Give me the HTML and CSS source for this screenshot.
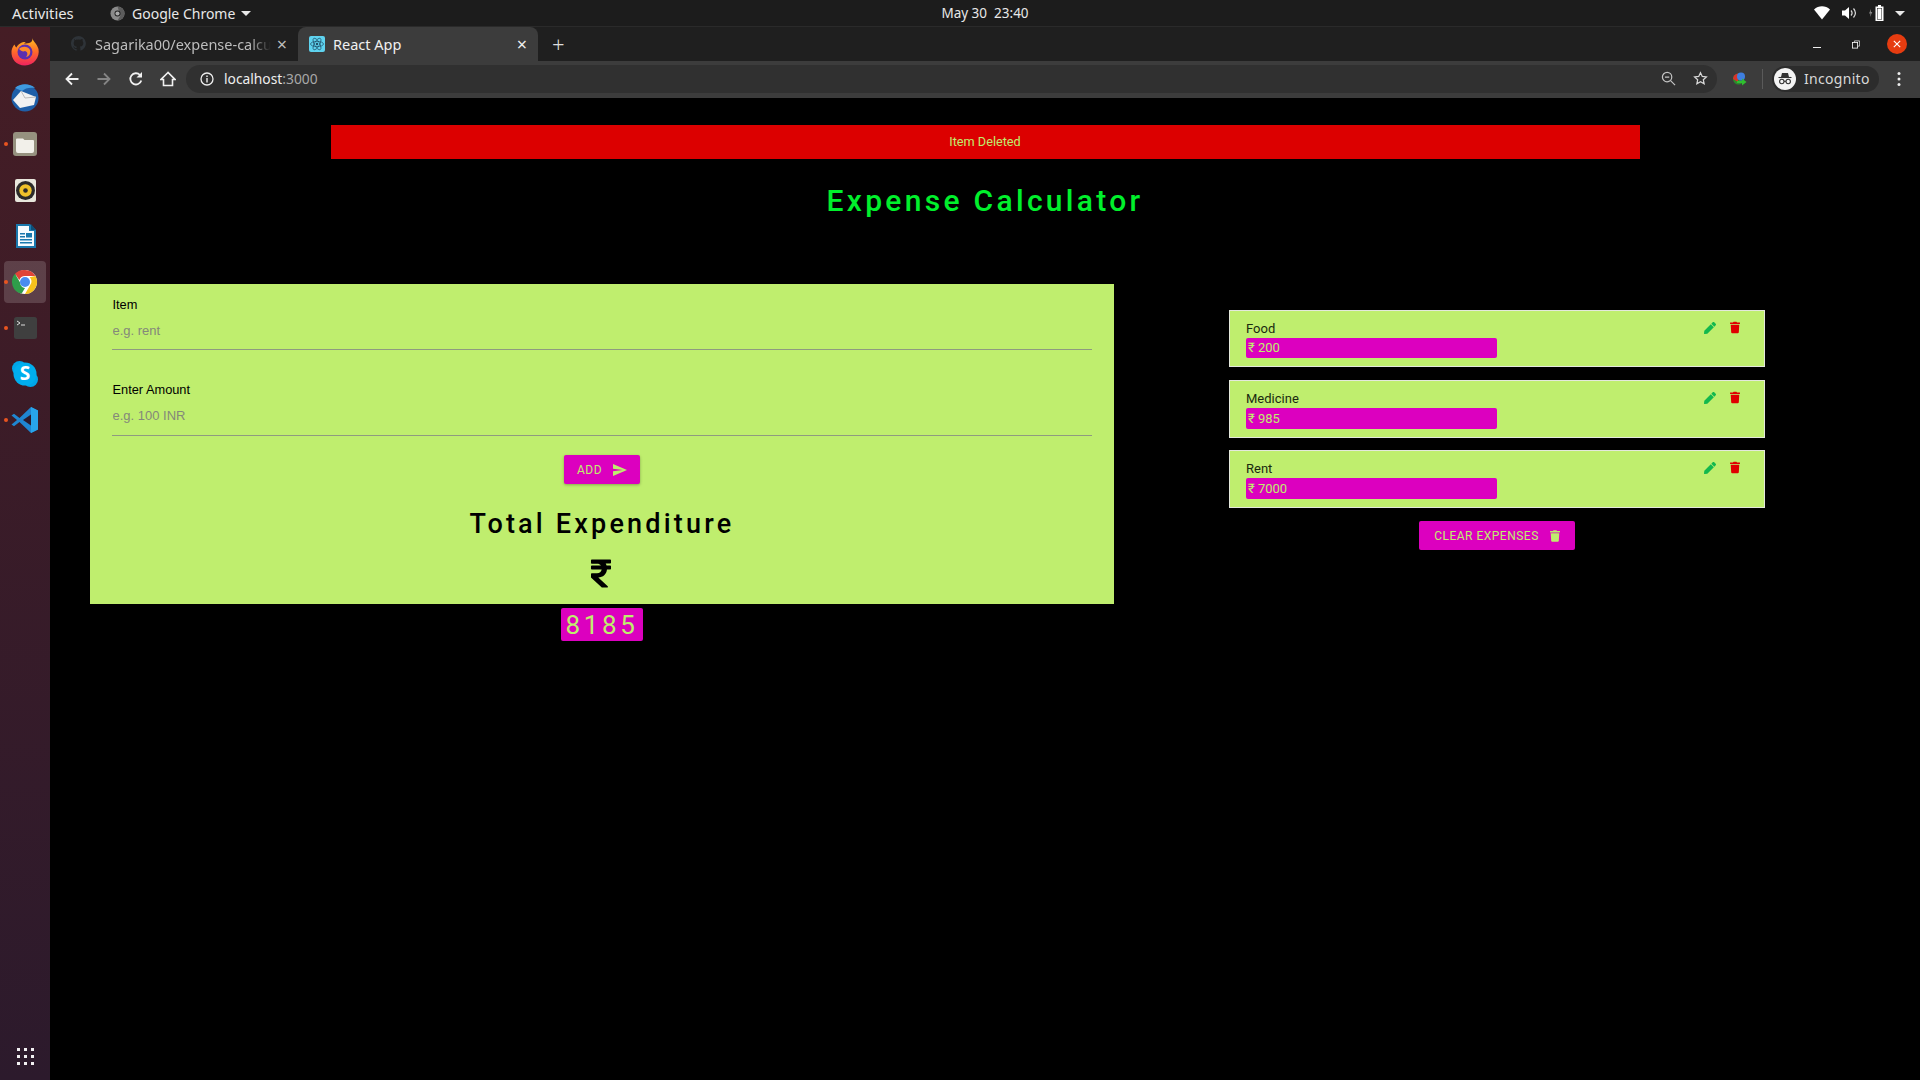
FILE: index.html
```html
<!DOCTYPE html>
<html lang="en">
<head>
<meta charset="utf-8">
<title>React App</title>
<link rel="stylesheet" href="styles.css">
</head>
<body>
<svg class="defs" width="0" height="0">
  <symbol id="trash" viewBox="0 0 448 512"><path d="M432 32H312l-9.4-18.7A24 24 0 0 0 281.1 0H166.8a23.72 23.72 0 0 0-21.4 13.3L136 32H16A16 16 0 0 0 0 48v32a16 16 0 0 0 16 16h416a16 16 0 0 0 16-16V48a16 16 0 0 0-16-16zM53.2 467a48 48 0 0 0 47.9 45h245.8a48 48 0 0 0 47.9-45L416 128H32z"/></symbol>
  <symbol id="pen" viewBox="0 0 512 512"><path d="M290.74 93.24l128.02 128.02-277.99 277.99-114.14 12.6C11.35 513.54-1.56 500.62.14 485.34l12.7-114.22 277.9-278.1zm207.2-19.06l-60.11-60.11c-18.75-18.75-49.16-18.75-67.91 0l-56.55 56.55 128.02 128.02 56.55-56.55c18.75-18.76 18.75-49.16 0-67.91z"/></symbol>
</svg>

<header class="topbar">
  <div class="top-left">
    <span class="activities">Activities</span>
    <span class="app-menu">
      <svg class="chrome-mono" viewBox="0 0 16 16"><circle cx="8" cy="8" r="7.5" fill="#8a8a8a"/><path d="M8 .5A7.500 7.500 0 0 1 15.500 8a7.500 7.500 0 0 1-7.500 7.500L11 10.500z" fill="#5c5c5c"/><circle cx="8" cy="8" r="3.200" fill="#222"/><circle cx="8" cy="8" r="2.200" fill="#aaa"/></svg>
      Google Chrome
      <i class="caret"></i>
    </span>
  </div>
  <div class="clock"><span>May 30</span><span>23:40</span></div>
  <div class="tray">
    <svg class="tray-wifi" viewBox="0 0 16 14"><path d="M0 3.5C4.5-.8 11.500-.8 16 3.500L8 13.500z" fill="#fff"/></svg>
    <svg class="tray-vol" viewBox="0 0 16 14"><path d="M1 4.500h3L8 1v12L4 9.500H1z" fill="#fff"/><path d="M10 4.500c1.300 1.500 1.300 3.500 0 5M12.500 2.500c2.300 2.700 2.300 6.300 0 9" fill="none" stroke="#ddd" stroke-width="1.200"/></svg>
    <svg class="tray-bat" viewBox="0 0 18 16"><path d="M3 4L1 8.500h1.500L2 12l2.300-5H2.800z" fill="#888"/><path d="M10 0h3v1.500h2.500V16h-8V1.500H10z" fill="#fff"/><rect x="9" y="3" width="5" height="11.500" fill="#1d1d1d"/><rect x="9.500" y="3.500" width="4" height="10.500" fill="#fff"/></svg>
    <i class="caret caret-tray"></i>
  </div>
</header>

<div class="desktop">
  <nav class="dock">
    <div class="dock-item">
      <svg viewBox="0 0 30 30"><defs><linearGradient id="fx" x1="0" y1="0" x2="0" y2="1"><stop offset="0" stop-color="#ffc01f"/><stop offset=".5" stop-color="#ff6a2a"/><stop offset="1" stop-color="#f0225f"/></linearGradient></defs><path d="M22 1c1 3 5 6 6.500 11 1.500 8-4.500 16.500-13.500 16.500S1 22 1.500 14C2 11 3.500 8.500 4.500 7.500 5 9 5.500 9.800 6.500 10.500 8 6.500 13 4.500 16 5c-1 .5-1.500 1-2 1.500 5 0 9.500-1 8-5.500z" fill="url(#fx)"/><circle cx="15" cy="15" r="7.500" fill="#5b2fb0"/><path d="M9 12c3-3 9-3 11 1 1 3-1 7-4 7 2-2 2-5-1-6-2 1-4 0-6-2z" fill="#ff8a2a"/></svg>
    </div>
    <div class="dock-item">
      <svg viewBox="0 0 30 30"><circle cx="15" cy="15" r="13.500" fill="#1f5fa8"/><path d="M5 5c5-5 15-5 20 0-5-1-10 0-13 3z" fill="#3f9ae0"/><path d="M3 17l8-9 15 6-2 8-14 3z" fill="#f2f2f2"/><path d="M11 8l4 7 11-1" fill="none" stroke="#bbb" stroke-width="1"/></svg>
    </div>
    <div class="dock-item has-dot">
      <svg viewBox="0 0 30 30"><rect x="3" y="3" width="24" height="24" rx="3" fill="#96917f"/><path d="M7 9.500h6l1.500 1.500H23a1 1 0 0 1 1 1v10a2 2 0 0 1-2 2H8a2 2 0 0 1-2-2V10.500a1 1 0 0 1 1-1z" fill="#f2f0ea"/></svg>
    </div>
    <div class="dock-item">
      <svg viewBox="0 0 30 30"><rect x="5" y="4" width="21" height="23" rx="2" fill="#e8e6dc"/><circle cx="15.500" cy="15.500" r="9.500" fill="#2b2b2b"/><circle cx="15.500" cy="15.500" r="6.200" fill="#efc22b"/><circle cx="15.500" cy="15.500" r="2.300" fill="#2b2b2b"/></svg>
    </div>
    <div class="dock-item">
      <svg viewBox="0 0 30 30"><path d="M6 3h14l6 6v18H6z" fill="#1a78ad"/><path d="M8 5h11v5h5v15H8z" fill="#f6fbfe"/><path d="M21 3l5 6h-5z" fill="#0d4f78"/><path d="M10 12h5v1.500h-5zM10 15h5v1.500h-5zM10 18h12v1.500H10zM10 21h12v1.500H10z" fill="#1a78ad"/><rect x="16" y="12" width="6" height="4.500" fill="#1a78ad"/></svg>
    </div>
    <div class="dock-item dock-active has-dot">
      <svg viewBox="0 0 30 30"><circle cx="15" cy="15" r="12" fill="#fff"/><path d="M15 3a12 12 0 0 1 10.400 6H15a6 6 0 0 0-5.700 4.100L5 6.800A12 12 0 0 1 15 3z" fill="#e04437"/><path d="M5 6.800l5.200 9A5.500 5.500 0 0 0 15 21l-3.300 5.600A12 12 0 0 1 5 6.800z" fill="#2f9d4a"/><path d="M25.400 9a12 12 0 0 1-10.400 18l5.200-9a6 6 0 0 0-.6-7.700z" fill="#f7c21c"/><circle cx="15" cy="15" r="5" fill="#4a8cf0"/></svg>
    </div>
    <div class="dock-item has-dot">
      <svg viewBox="0 0 30 30"><rect x="4" y="4" width="23" height="22" rx="2.500" fill="#3f3f3f"/><path d="M7 8l3 2-3 2" fill="none" stroke="#ddd" stroke-width="1"/><path d="M11 12h4" stroke="#ddd" stroke-width="1"/></svg>
    </div>
    <div class="dock-item">
      <svg viewBox="0 0 30 30"><circle cx="9.500" cy="9.500" r="7.500" fill="#00a6e8"/><circle cx="20.500" cy="20.500" r="7.500" fill="#00a6e8"/><circle cx="15" cy="15" r="11.500" fill="#00aeee"/><text class="skype-s" x="15" y="21" text-anchor="middle">S</text></svg>
    </div>
    <div class="dock-item has-dot">
      <svg viewBox="0 0 30 30"><path d="M21 2l7 3.500v19L21 28 9.500 17l-5.500 4.200L1.500 19.500 7 15 1.500 10.500 4 8.800l5.500 4.200z" fill="#1f86d1"/><path d="M21 2l7 3.500v19L21 28z" fill="#28a4ea"/><path d="M21 9.500L13 15l8 5.500z" fill="#2c1a2c"/></svg>
    </div>
    <div class="dock-spacer"></div>
    <div class="grid-dots"><i></i><i></i><i></i><i></i><i></i><i></i><i></i><i></i><i></i></div>
  </nav>

  <div class="window">
    <div class="tabstrip">
      <div class="tab">
        <svg class="tab-gh" viewBox="0 0 16 16"><path d="M8 0a8 8 0 0 0-2.500 15.600c.4.100.5-.2.500-.4v-1.400c-2.200.5-2.700-1-2.700-1-.4-.9-.9-1.200-.9-1.200-.7-.5.100-.5.100-.5.800.1 1.200.8 1.200.8.700 1.200 1.900.9 2.300.7.100-.5.300-.9.500-1.100-1.800-.2-3.600-.9-3.600-4 0-.9.300-1.600.8-2.100-.1-.2-.4-1 .1-2.100 0 0 .7-.2 2.200.8a7.600 7.600 0 0 1 4 0c1.500-1 2.200-.8 2.200-.8.400 1.100.2 1.900.1 2.100.5.600.8 1.300.8 2.100 0 3.100-1.900 3.700-3.700 3.900.3.300.6.800.6 1.500v2.200c0 .2.100.5.600.4A8 8 0 0 0 8 0z" fill="#2e3338"/></svg>
        <span class="tab-title tab-fade">Sagarika00/expense-calcu</span>
        <span class="tab-x">×</span>
      </div>
      <div class="tab tab-current">
        <svg class="tab-react" viewBox="0 0 16 16"><rect width="16" height="16" rx="2" fill="#5fd3ef"/><g fill="none" stroke="#1f4f68" stroke-width=".7"><ellipse cx="8" cy="8" rx="6.500" ry="2.600"/><ellipse cx="8" cy="8" rx="6.500" ry="2.600" transform="rotate(60 8 8)"/><ellipse cx="8" cy="8" rx="6.500" ry="2.600" transform="rotate(120 8 8)"/></g><circle cx="8" cy="8" r="1.200" fill="#1f4f68"/></svg>
        <span class="tab-title">React App</span>
        <span class="tab-x">×</span>
      </div>
      <span class="tab-new">+</span>
      <div class="win-controls">
        <i class="win-min"></i>
        <svg class="win-restore" viewBox="0 0 10 10"><path d="M3 2.500V.5h6.500V7H7.500" fill="none" stroke="#ddd"/><rect x=".5" y="2.500" width="6.500" height="7" fill="none" stroke="#fff"/></svg>
        <span class="win-close">
          <svg viewBox="0 0 10 10"><path d="M1 1l8 8M9 1l-8 8" stroke="#fff" stroke-width="1.400"/></svg>
        </span>
      </div>
    </div>
    <div class="toolbar">
      <svg class="tb-icon" viewBox="0 0 16 16"><path d="M14.500 8H2.500M8 2.500L2.500 8 8 13.500" fill="none" stroke="#f1f1f1" stroke-width="1.800"/></svg>
      <svg class="tb-icon" viewBox="0 0 16 16"><path d="M1.500 8h12M8 2.500L13.500 8 8 13.500" fill="none" stroke="#858585" stroke-width="1.800"/></svg>
      <svg class="tb-icon" viewBox="0 0 16 16"><path d="M13.300 9.500A5.600 5.600 0 1 1 12 4" fill="none" stroke="#f1f1f1" stroke-width="1.800"/><path d="M14 1v5.500H8.500z" fill="#f1f1f1"/></svg>
      <svg class="tb-icon" viewBox="0 0 16 16"><path d="M8 1.500L1 8.500h2.500v6h9v-6H15z" fill="none" stroke="#f1f1f1" stroke-width="1.600"/></svg>
      <div class="omnibox">
        <svg class="omni-info" viewBox="0 0 14 14"><circle cx="7" cy="7" r="6" fill="none" stroke="#eee" stroke-width="1.300"/><path d="M6.300 6h1.400v4.500H6.300zM6.300 3.500h1.400v1.400H6.300z" fill="#eee"/></svg>
        <span class="url">localhost<span class="url-port">:3000</span></span>
        <span class="omni-spacer"></span>
        <svg class="omni-zoom" viewBox="0 0 16 16"><circle cx="6.500" cy="6.500" r="5" fill="none" stroke="#c4c4c4" stroke-width="1.300"/><path d="M4.200 6.500h4.600M10.200 10.200L15 15" stroke="#c4c4c4" stroke-width="1.300"/></svg>
        <svg class="omni-star" viewBox="0 0 16 16"><path d="M8 1.800l1.900 4 4.400.5-3.300 3 .9 4.400L8 11.500l-3.900 2.200.9-4.400-3.300-3 4.400-.5z" fill="none" stroke="#d8d8d8" stroke-width="1.300"/></svg>
      </div>
      <svg class="ext-idm" viewBox="0 0 16 16"><circle cx="7.500" cy="8" r="5.500" fill="#2c8a2c"/><path d="M2 8a5.500 5.500 0 0 1 5-5.500L7 11z" fill="#d8322a"/><circle cx="10" cy="5.500" r="4" fill="#3f7fe0"/><path d="M6 10h5V7.500L15.500 11 11 14.500V12H6z" fill="#2fbf2f"/></svg>
      <i class="tb-divider"></i>
      <div class="incognito">
        <span class="incog-avatar">
          <svg viewBox="0 0 16 16"><path d="M5 2h6l1 4H4z" fill="#333"/><path d="M1.500 6.500h13" stroke="#333" stroke-width="1.100"/><circle cx="4.800" cy="10.500" r="2.200" fill="none" stroke="#333" stroke-width="1.100"/><circle cx="11.200" cy="10.500" r="2.200" fill="none" stroke="#333" stroke-width="1.100"/><path d="M7 10.300h2" stroke="#333"/></svg>
        </span>
        <span class="incog-label">Incognito</span>
      </div>
      <svg class="tb-menu" viewBox="0 0 4 16"><circle cx="2" cy="2.500" r="1.500" fill="#eee"/><circle cx="2" cy="8" r="1.500" fill="#eee"/><circle cx="2" cy="13.500" r="1.500" fill="#eee"/></svg>
    </div>

    <main class="page">
      <div class="alert">Item Deleted</div>
      <h1 class="title">Expense Calculator</h1>
      <div class="columns">
        <section class="form-card">
          <label class="field">
            <span class="field-label">Item</span>
            <input class="field-input" type="text" placeholder="e.g. rent">
          </label>
          <label class="field field-second">
            <span class="field-label">Enter Amount</span>
            <input class="field-input" type="text" placeholder="e.g. 100 INR">
          </label>
          <button class="btn btn-add" type="button">ADD
            <svg class="add-icon" viewBox="2 3 21 18"><path d="M2 21l21-9L2 3v7l15 2-15 2z"/></svg>
          </button>
          <h2 class="total-title">Total Expenditure</h2>
          <svg class="rupee" viewBox="0 32 320 448"><path d="M308 96c6.627 0 12-5.373 12-12V44c0-6.627-5.373-12-12-12H12C5.373 32 0 37.373 0 44v44.748c0 6.627 5.373 12 12 12h85.28c27.308 0 48.261 9.958 60.97 27.252H12c-6.627 0-12 5.373-12 12v40c0 6.627 5.373 12 12 12h158.757c-6.217 36.086-32.961 58.632-74.757 58.632H12c-6.627 0-12 5.373-12 12v53.012c0 3.349 1.400 6.546 3.861 8.818l165.052 152.356a12.001 12.001 0 0 0 8.139 3.182h82.562c10.924 0 16.166-13.408 8.139-20.818L116.871 319.906c76.499-2.340 131.144-53.395 138.318-127.906H308c6.627 0 12-5.373 12-12v-40c0-6.627-5.373-12-12-12h-58.690c-3.486-11.541-8.280-22.246-14.252-32H308z"/></svg>
          <div class="total-value">8185</div>
        </section>

        <section class="list">
          <article class="expense">
            <div class="expense-main">
              <div class="expense-name">Food</div>
              <div class="expense-amount">₹ 200</div>
            </div>
            <div class="expense-actions">
              <svg class="act-edit"><use href="#pen"/></svg>
              <svg class="act-del"><use href="#trash"/></svg>
            </div>
          </article>
          <article class="expense">
            <div class="expense-main">
              <div class="expense-name">Medicine</div>
              <div class="expense-amount">₹ 985</div>
            </div>
            <div class="expense-actions">
              <svg class="act-edit"><use href="#pen"/></svg>
              <svg class="act-del"><use href="#trash"/></svg>
            </div>
          </article>
          <article class="expense">
            <div class="expense-main">
              <div class="expense-name">Rent</div>
              <div class="expense-amount">₹ 7000</div>
            </div>
            <div class="expense-actions">
              <svg class="act-edit"><use href="#pen"/></svg>
              <svg class="act-del"><use href="#trash"/></svg>
            </div>
          </article>
          <button class="btn btn-clear" type="button">CLEAR EXPENSES
            <svg class="clear-icon"><use href="#trash"/></svg>
          </button>
        </section>
      </div>
    </main>
  </div>
</div>
</body>
</html>
```

FILE: styles.css
```css
* { box-sizing: border-box; }
html, body { height: 100%; }
body {
  margin: 0;
  width: 1920px;
  height: 1080px;
  overflow: hidden;
  display: flex;
  flex-direction: column;
  background: #000;
  font-family: "Roboto", sans-serif;
}
.defs { display: block; height: 0; }

/* GNOME top bar */
.topbar {
  height: 27px;
  flex: none;
  background: #1c1c1c;
  border-bottom: 1px solid #2a2a2a;
  display: grid;
  grid-template-columns: 1fr auto 1fr;
  align-items: center;
  color: #e8e8e8;
  font-family: "Noto Sans", sans-serif;
  font-size: 14px;
}
.top-left { display: flex; align-items: center; padding-left: 12px; }
.activities { width: 98px; font-size: 14.800px; }
.app-menu { display: flex; align-items: center; gap: 6px; }
.chrome-mono { width: 15px; height: 15px; margin-right: 1px; }
.caret {
  width: 0; height: 0;
  border-left: 5px solid transparent;
  border-right: 5px solid transparent;
  border-top: 5px solid #e8e8e8;
}
.clock { display: flex; gap: 7px; margin-left: 50px; font-size: 13.500px; }
.tray { display: flex; align-items: center; justify-content: flex-end; padding-right: 15px; }
.tray-wifi { width: 16px; height: 14px; margin-right: 11px; }
.tray-vol { width: 16px; height: 14px; margin-right: 11px; }
.tray-bat { width: 18px; height: 16px; margin-right: 9px; }

.desktop { flex: 1; display: flex; min-height: 0; }

/* Ubuntu dock */
.dock {
  width: 50px;
  flex: none;
  background: linear-gradient(#451d25, #2c1a2c);
  display: flex;
  flex-direction: column;
  align-items: center;
  padding-top: 2px;
}
.dock-item {
  width: 42px;
  height: 46px;
  flex: none;
  display: flex;
  align-items: center;
  justify-content: center;
  position: relative;
}
.dock-item svg { width: 30px; height: 30px; display: block; }
.dock-active::before {
  content: "";
  position: absolute;
  left: 0; top: 2px;
  width: 42px; height: 42px;
  border-radius: 4px;
  background: rgba(255,255,255,.16);
}
.dock-active svg { position: relative; }
.has-dot::after {
  content: "";
  position: absolute;
  left: 0; top: 21px;
  width: 4px; height: 4px;
  border-radius: 50%;
  background: #e95420;
}
.skype-s { font: 700 19px "Open Sans", sans-serif; fill: #fff; }
.dock-spacer { flex: 1; }
.grid-dots {
  display: grid;
  grid-template-columns: repeat(3, 3px);
  gap: 4px;
  margin-bottom: 15px;
}
.grid-dots i { width: 3px; height: 3px; background: #f2f0f2; }

/* Chrome */
.window { flex: 1; min-width: 0; display: flex; flex-direction: column; }
.tabstrip {
  height: 34px;
  flex: none;
  background: #1f1f1f;
  display: flex;
  align-items: flex-end;
  padding-left: 10px;
  color: #ddd;
  font-family: "Noto Sans", sans-serif;
  font-size: 14.500px;
}
.tab {
  width: 238px;
  height: 34px;
  display: flex;
  align-items: center;
  padding: 0 8px 1px 11px;
  color: #bdbdbd;
}
.tab-gh { width: 15px; height: 15px; flex: none; margin-right: 9px; }
.tab-react { width: 16px; height: 16px; flex: none; margin-right: 8px; }
.tab-title { flex: 1; min-width: 0; overflow: hidden; white-space: nowrap; }
.tab-fade { -webkit-mask-image: linear-gradient(90deg, #000 88%, transparent); mask-image: linear-gradient(90deg, #000 88%, transparent); }
.tab-x { width: 16px; text-align: center; font-size: 18px; line-height: 1; flex: none; margin-left: 3px; }
.tab-current {
  width: 240px;
  background: #3c3c3c;
  color: #f0f0f0;
  border-radius: 8px 8px 0 0;
}
.tab-new { margin-left: 14px; align-self: center; font-size: 22px; line-height: 1; color: #ddd; font-weight: 300; }
.win-controls { margin-left: auto; display: flex; align-items: center; align-self: stretch; padding-right: 13px; }
.win-min { width: 8px; height: 1px; background: #eee; margin-top: 6px; margin-right: 31px; }
.win-restore { width: 8px; height: 9px; margin-right: 27px; }
.win-close {
  width: 20px; height: 20px;
  border-radius: 50%;
  background: #e63c10;
  display: flex;
  align-items: center;
  justify-content: center;
}
.win-close svg { width: 8px; height: 8px; }

.toolbar {
  height: 37px;
  flex: none;
  background: #3c3c3c;
  display: flex;
  align-items: center;
  padding: 0 0 2px 14px;
  color: #eee;
  font-family: "Noto Sans", sans-serif;
}
.tb-icon { width: 16px; height: 16px; margin-right: 16px; flex: none; }
.omnibox {
  width: 1531px;
  margin-left: -6px;
  height: 28px;
  border-radius: 14px;
  background: #303030;
  display: flex;
  align-items: center;
  padding-left: 14px;
  font-size: 13.800px;
}
.omni-info { width: 14px; height: 14px; margin-right: 10px; }
.url { color: #eee; }
.url-port { color: #a8a8a8; }
.omni-spacer { flex: 1; }
.omni-zoom { width: 15px; height: 15px; margin-right: 17px; }
.omni-star { width: 15px; height: 15px; margin-right: 9px; }
.ext-idm { width: 16px; height: 16px; margin-left: 14px; }
.tb-divider { width: 1px; height: 20px; background: #5a5a5a; margin-left: 15px; margin-right: 9px; }
.incognito {
  width: 107px;
  height: 26px;
  border-radius: 13px;
  background: #2c2c2c;
  display: flex;
  align-items: center;
  padding-left: 2px;
  font-size: 14px;
}
.incog-avatar {
  width: 22px; height: 22px;
  border-radius: 50%;
  background: #f4f4f4;
  display: flex;
  align-items: center;
  justify-content: center;
  margin-right: 8px;
}
.incog-avatar svg { width: 16px; height: 16px; }
.incog-label { color: #d8d8d8; letter-spacing: .3px; }
.tb-menu { width: 4px; height: 16px; margin-left: 18px; }

/* The app */
.page {
  flex: 1;
  min-height: 0;
  background: #000;
  padding-top: 27px;
}
.alert {
  width: 1309px;
  height: 34px;
  margin: 0 auto;
  padding-bottom: 1px;
  background: #dc0000;
  color: #bfee6e;
  font-size: 12.700px;
  display: flex;
  align-items: center;
  justify-content: center;
}
.title {
  margin: 21px 0 0;
  height: 40px;
  line-height: 41px;
  text-align: center;
  color: #00f02c;
  font-size: 30px;
  font-weight: 500;
  letter-spacing: 3.300px;
}
.columns {
  display: flex;
  align-items: flex-start;
  margin-top: 64px;
  padding-left: 40px;
}
.form-card {
  width: 1024px;
  height: 320px;
  background: #bfee6e;
  padding: 14px 22px 0;
  display: flex;
  flex-direction: column;
  align-items: center;
}
.field { display: block; width: 100%; }
.field-second { margin-top: 33px; }
.field-label {
  display: block;
  height: 14px;
  line-height: 14px;
  padding-left: .5px;
  font-family: "Liberation Sans", sans-serif;
  font-size: 12.800px;
  color: #000;
}
.field-input {
  display: block;
  width: 100%;
  height: 38px;
  padding: 0 0 0 .5px;
  border: 0;
  border-bottom: 1px solid #8f9a80;
  background: transparent;
  font-family: "Liberation Sans", sans-serif;
  font-size: 13px;
  outline: none;
}
.field-second .field-input { height: 39px; padding-bottom: 1px; }
.field-input::placeholder { color: #84887a; opacity: 1; }
.btn {
  border: 0;
  border-radius: 2px;
  background: #dc00bf;
  color: #bfee6e;
  font-family: "Roboto", sans-serif;
  font-size: 12px;
  letter-spacing: .5px;
  display: flex;
  align-items: center;
  justify-content: center;
  padding: 0;
  box-shadow: 0 1px 3px rgba(0,0,0,.3);
}
.btn-add { width: 76px; height: 29px; margin-top: 19px; flex: none; }
.add-icon { width: 14px; height: 12px; fill: #bfee6e; margin-left: 11px; }
.total-title {
  margin: 23px 0 0;
  height: 34px;
  line-height: 34px;
  flex: none;
  color: #000;
  font-size: 27px;
  font-weight: 500;
  letter-spacing: 3.200px;
}
.rupee { width: 20px; height: 29px; margin-top: 18px; margin-right: 2px; flex: none; fill: #000; }
.total-value {
  width: 82px;
  height: 33px;
  margin-top: 20px;
  flex: none;
  border-radius: 2px;
  background: #dc00bf;
  color: #bfee6e;
  font-size: 26px;
  letter-spacing: 3.700px;
  line-height: 34px;
  text-align: center;
}
.list {
  width: 536px;
  margin-left: 115px;
  margin-top: 26px;
  display: flex;
  flex-direction: column;
  gap: 12px;
  align-items: center;
}
.expense {
  width: 100%;
  height: 57px;
  background: #bfee6e;
  border: 1px solid #e4e8dc;
  padding: 11px 24px 0 16px;
  display: flex;
  justify-content: space-between;
}
.expense:first-child { margin-bottom: 1px; }
.expense + .expense { height: 58px; }
.expense-main { width: 251px; }
.expense-name { height: 16px; line-height: 14px; font-size: 13px; color: #1a2a10; }
.expense-amount {
  height: 20px;
  border-radius: 2px;
  background: #dc00bf;
  color: #bfee6e;
  font-size: 13px;
  line-height: 20px;
  padding-left: 2px;
}
.expense + .expense .expense-amount { height: 21px; line-height: 21px; }
.expense-actions { display: flex; gap: 14px; height: 13px; align-items: center; margin-top: -1px; }
.act-edit { width: 12px; height: 12px; fill: #12b84e; }
.act-del { width: 10px; height: 13px; fill: #df0000; }
.btn-clear { width: 156px; height: 29px; margin-top: 1px; flex: none; }
.clear-icon { width: 10px; height: 12px; fill: #bfee6e; margin-left: 11px; }
```
